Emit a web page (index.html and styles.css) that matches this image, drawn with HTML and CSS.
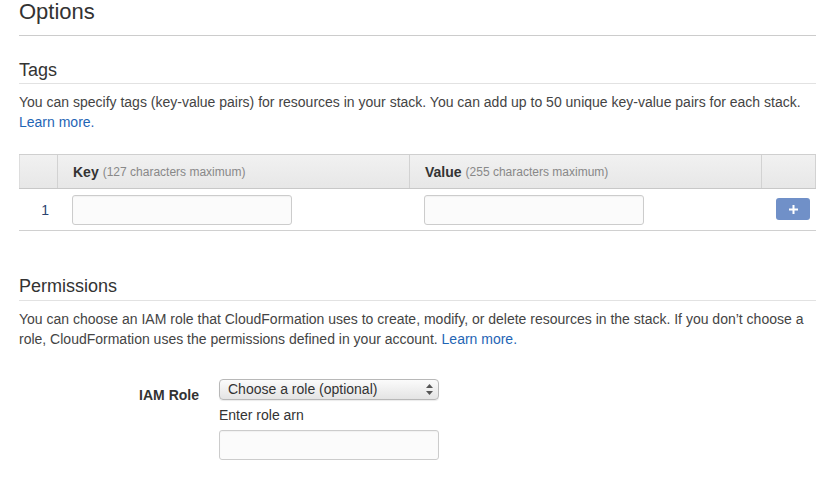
FILE: index.html
```html
<!DOCTYPE html>
<html>
<head>
<meta charset="utf-8">
<link rel="stylesheet" href="styles.css">
</head>
<body>
<div class="page">
  <h1 class="title">Options</h1>

  <section class="section">
    <h2 class="section-title">Tags</h2>
    <p class="desc">You can specify tags (key-value pairs) for resources in your stack. You can add up to 50 unique key-value pairs for each stack. <a class="link" href="#">Learn more.</a></p>

    <div class="tag-table">
      <div class="thead">
        <div class="cell c-num"></div>
        <div class="cell c-key"><b>Key</b> <span class="hint">(127 characters maximum)</span></div>
        <div class="cell c-val"><b>Value</b> <span class="hint">(255 characters maximum)</span></div>
        <div class="cell c-act"></div>
      </div>
      <div class="trow">
        <div class="cell c-num num">1</div>
        <div class="cell c-key"><input class="text-input" type="text"></div>
        <div class="cell c-val"><input class="text-input" type="text"></div>
        <div class="cell c-act"><button class="add-btn" type="button">
          <svg width="9" height="9" viewBox="0 0 9 9"><path d="M3.5 0h2v3.5H9v2H5.5V9h-2V5.5H0v-2h3.5z" fill="#fff"/></svg>
        </button></div>
      </div>
    </div>
  </section>

  <section class="section perms">
    <h2 class="section-title">Permissions</h2>
    <p class="desc">You can choose an IAM role that CloudFormation uses to create, modify, or delete resources in the stack. If you don’t choose a role, CloudFormation uses the permissions defined in your account. <a class="link" href="#">Learn more.</a></p>

    <div class="form-row">
      <label class="form-label">IAM Role</label>
      <div class="form-field">
        <div class="select-wrap">
          <select class="select">
            <option>Choose a role (optional)</option>
          </select>
          <svg class="select-arrows" width="7" height="11" viewBox="0 0 7 11"><path d="M3.5 0L7 4H0z M3.5 11L0 7h7z" fill="#555"/></svg>
        </div>
        <div class="sub-label">Enter role arn</div>
        <input class="text-input arn" type="text">
      </div>
    </div>
  </section>
</div>
</body>
</html>
```

FILE: styles.css
```css
* { box-sizing: border-box; }
html, body { margin: 0; padding: 0; background: #fff; }
body {
  font-family: "Liberation Sans", Arial, Helvetica, sans-serif;
  font-size: 14px;
  color: #444;
}
.page {
  width: 797px;
  margin-left: 19px;
}
.title {
  margin: 0;
  font-size: 22px;
  font-weight: normal;
  line-height: 24px;
  color: #333;
  padding-bottom: 11px;
  border-bottom: 1px solid #ccc;
}
.section-title {
  margin: 23px 0 0;
  font-size: 18px;
  font-weight: normal;
  line-height: 22px;
  color: #333;
  padding-bottom: 2px;
  border-bottom: 1px solid #e2e2e2;
}
.perms .section-title { margin-top: 44px; padding-bottom: 3px; }
.desc {
  margin: 8px 0 0;
  line-height: 20px;
}
.link { color: #1f65b5; text-decoration: none; }

.tag-table { margin-top: 22px; }
.thead, .trow { display: flex; }
.thead {
  height: 35px;
  background: linear-gradient(#f1f1f1, #e7e7e7);
  border-top: 1px solid #cfcfcf;
  border-bottom: 1px solid #c8c8c8;
}
.thead .cell {
  display: flex;
  align-items: center;
  border-left: 1px solid #d2d2d2;
  color: #888;
  font-size: 12px;
}
.thead .cell:first-child { border-left-color: #ddd; }
.thead .cell:last-child { border-right: 1px solid #d2d2d2; }
.thead b { color: #333; font-size: 14px; margin-right: 4px; }
.c-num { width: 38px; }
.c-key, .c-val { width: 352px; padding-left: 15px; }
.c-act { width: 55px; padding-left: 15px; }
.trow {
  height: 42px;
  border-bottom: 1px solid #d0d0d0;
  align-items: center;
}
.trow .cell { display: flex; align-items: center; }
.num {
  justify-content: flex-end;
  padding-right: 8px;
  color: #2b4470;
  font-size: 14px;
}
.text-input {
  width: 220px;
  height: 30px;
  border: 1px solid #cccccc;
  border-radius: 3px;
  background: #fbfbfb;
  box-shadow: inset 0 1px 1px rgba(0,0,0,0.04);
  font-family: inherit;
  font-size: 14px;
  padding: 4px 6px;
  margin: 0;
}
.add-btn {
  width: 34px;
  height: 22px;
  margin-top: -1px;
  border: none;
  border-radius: 3px;
  background: #7090c8;
  display: flex;
  align-items: center;
  justify-content: center;
  padding: 0;
}

.form-row {
  display: flex;
  margin-top: 30px;
}
.form-label {
  width: 180px;
  text-align: right;
  padding-right: 0;
  font-weight: bold;
  color: #333;
  padding-top: 6px;
  line-height: 20px;
}
.form-field {
  margin-left: 20px;
  display: flex;
  flex-direction: column;
}
.select-wrap { position: relative; width: 220px; }
.select {
  -webkit-appearance: none;
  appearance: none;
  width: 220px;
  height: 21px;
  margin: 0;
  border: 1px solid #b8b8b8;
  border-radius: 4px;
  background: linear-gradient(#fbfbfb, #e4e4e4);
  font-family: inherit;
  font-size: 14px;
  color: #333;
  padding: 0 0 0 8px;
  line-height: 19px;
  box-shadow: 0 1px 1px rgba(0,0,0,0.08);
}
.select-arrows {
  position: absolute;
  right: 6px;
  top: 5px;
}
.sub-label {
  margin-top: 5px;
  line-height: 20px;
  color: #333;
}
.arn { margin-top: 5px; }
```
